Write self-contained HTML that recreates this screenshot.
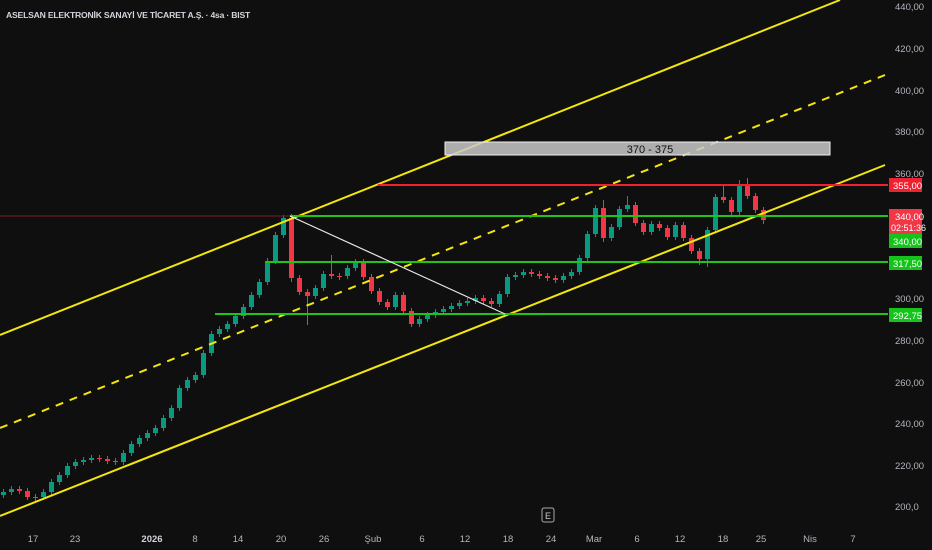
<!DOCTYPE html>
<html><head><meta charset="utf-8"><style>
html,body{margin:0;padding:0;background:#0f0f0f;width:932px;height:550px;overflow:hidden;font-family:"Liberation Sans",sans-serif}
svg{position:absolute;left:0;top:0}
.t{position:absolute;left:6px;top:10px;color:#d1d4dc;font-size:8.6px;font-weight:bold;letter-spacing:-0.2px}
</style></head><body>
<svg width="932" height="550" xmlns="http://www.w3.org/2000/svg">
<path fill="#089981" d="M1,492h5v3h-5zM9,489h5v3h-5zM41,492h5v5h-5zM49,482h5v10h-5zM57,475h5v7h-5zM65,466h5v9h-5zM73,462h5v4h-5zM81,460h5v2h-5zM89,458h5v2h-5zM121,453h5v9h-5zM129,444h5v9h-5zM137,438h5v6h-5zM145,433h5v5h-5zM153,428h5v5h-5zM161,418h5v10h-5zM169,408h5v10h-5zM177,388h5v20h-5zM185,380h5v8h-5zM193,375h5v5h-5zM201,353h5v22h-5zM209,334h5v19h-5zM217,329h5v5h-5zM225,324h5v5h-5zM233,316h5v8h-5zM241,307h5v9h-5zM249,295h5v12h-5zM257,282h5v13h-5zM265,261h5v21h-5zM273,235h5v26h-5zM281,218h5v17h-5zM313,288h5v8h-5zM321,274h5v14h-5zM345,268h5v8h-5zM353,262h5v6h-5zM393,295h5v12h-5zM417,319h5v5h-5zM425,315h5v4h-5zM433,312h5v3h-5zM441,309h5v3h-5zM449,306h5v3h-5zM457,303h5v3h-5zM465,301h5v2h-5zM473,298h5v3h-5zM497,294h5v10h-5zM505,277h5v17h-5zM513,275h5v2h-5zM521,272h5v3h-5zM561,276h5v4h-5zM569,272h5v4h-5zM577,258h5v14h-5zM585,234h5v24h-5zM593,208h5v26h-5zM609,227h5v11h-5zM617,209h5v18h-5zM625,205h5v4h-5zM649,224h5v8h-5zM673,225h5v12h-5zM705,230h5v29h-5zM713,197h5v33h-5zM737,185h5v27h-5z"/>
<path stroke="#089981" stroke-width="1" d="M3.5,489v9M11.5,486v9M43.5,489v11M51.5,479v16M59.5,472v13M67.5,463v15M75.5,459v10M83.5,457v8M91.5,455v8M123.5,450v15M131.5,441v15M139.5,435v12M147.5,430v11M155.5,425v11M163.5,415v16M171.5,405v16M179.5,385v26M187.5,377v14M195.5,372v11M203.5,350v28M211.5,331v25M219.5,326v11M227.5,321v11M235.5,313v14M243.5,304v15M251.5,292v18M259.5,279v19M267.5,258v27M275.5,232v32M283.5,215v23M315.5,285v14M323.5,271v20M347.5,265v14M355.5,259v12M395.5,292v18M419.5,316v11M427.5,312v10M435.5,309v9M443.5,306v9M451.5,303v9M459.5,300v9M467.5,298v8M475.5,295v9M499.5,291v16M507.5,274v23M515.5,272v8M523.5,269v9M563.5,273v10M571.5,269v10M579.5,255v20M587.5,231v30M595.5,205v32M611.5,224v17M619.5,206v24M627.5,196v16M651.5,221v14M675.5,222v18M707.5,227v40M715.5,194v39M739.5,180v35"/>
<path fill="#f23645" d="M17,489h5v2h-5zM25,491h5v6h-5zM33,497h5v1h-5zM97,458h5v1h-5zM105,459h5v2h-5zM113,461h5v1h-5zM289,218h5v60h-5zM297,278h5v14h-5zM305,292h5v4h-5zM329,274h5v2h-5zM337,276h5v1h-5zM361,262h5v15h-5zM369,277h5v14h-5zM377,291h5v11h-5zM385,302h5v5h-5zM401,295h5v16h-5zM409,311h5v13h-5zM481,298h5v3h-5zM489,301h5v3h-5zM529,272h5v2h-5zM537,274h5v2h-5zM545,276h5v2h-5zM553,278h5v2h-5zM601,208h5v30h-5zM633,205h5v18h-5zM641,223h5v9h-5zM657,224h5v4h-5zM665,228h5v9h-5zM681,225h5v13h-5zM689,238h5v13h-5zM697,251h5v8h-5zM721,197h5v3h-5zM729,200h5v12h-5zM745,185h5v11h-5zM753,196h5v14h-5zM761,210h5v10h-5z"/>
<path stroke="#f23645" stroke-width="1" d="M19.5,486v8M27.5,488v12M35.5,494v7M99.5,455v7M107.5,456v8M115.5,458v7M291.5,214v68M299.5,275v20M307.5,289v36M331.5,255v24M339.5,273v7M363.5,259v21M371.5,274v20M379.5,288v17M387.5,299v11M403.5,292v22M411.5,308v19M483.5,295v9M491.5,298v9M531.5,269v8M539.5,271v8M547.5,273v8M555.5,275v8M603.5,200v42M635.5,202v24M643.5,220v15M659.5,221v10M667.5,225v15M683.5,222v19M691.5,235v19M699.5,248v17M723.5,186v17M731.5,197v18M747.5,178v21M755.5,193v20M763.5,207v17"/>
<line x1="0" y1="216" x2="290" y2="216" stroke="#7a1f24" stroke-width="1"/>
<line x1="0" y1="335" x2="840" y2="0" stroke="#f5e50f" stroke-width="2"/>
<line x1="0" y1="428" x2="885" y2="75" stroke="#f5e50f" stroke-width="2" stroke-dasharray="8,7"/>
<line x1="0" y1="516" x2="885" y2="165" stroke="#f5e50f" stroke-width="2"/>
<line x1="378" y1="185" x2="888" y2="185" stroke="#f0202e" stroke-width="2"/>
<line x1="290" y1="216" x2="888" y2="216" stroke="#22c318" stroke-width="2"/>
<line x1="265" y1="262" x2="888" y2="262" stroke="#22c318" stroke-width="2"/>
<line x1="215" y1="314" x2="888" y2="314" stroke="#22c318" stroke-width="2"/>
<line x1="290" y1="216" x2="505" y2="314" stroke="#e8e8e8" stroke-width="1.2"/>
<rect x="445" y="142" width="385" height="13" fill="#c9c9c9" fill-opacity="0.85" stroke="#eee" stroke-width="1"/>
<text x="650" y="153" fill="#111" font-size="11" text-anchor="middle" font-family="Liberation Sans">370 - 375</text>
<g font-size="9.5" fill="#b2b5be" font-family="Liberation Sans">
<text x="895" y="10">440,00</text><text x="895" y="52">420,00</text><text x="895" y="94">400,00</text>
<text x="895" y="135">380,00</text><text x="895" y="177">360,00</text><text x="895" y="302">300,00</text>
<text x="895" y="344">280,00</text><text x="895" y="386">260,00</text><text x="895" y="427">240,00</text>
<text x="895" y="469">220,00</text><text x="895" y="510">200,0</text>
</g>
<g font-size="9.5" font-family="Liberation Sans" fill="#fff">
<rect x="889" y="178" width="33" height="14" fill="#f0202e"/><text x="893" y="189">355,00</text>
<rect x="889" y="209" width="33" height="25" fill="#f23645"/><text x="895" y="220">340,00</text><text x="891" y="231" font-size="9">02:51:36</text>
<rect x="889" y="234" width="33" height="14" fill="#14c41a"/><text x="893" y="245">340,00</text>
<rect x="889" y="256" width="33" height="14" fill="#14c41a"/><text x="893" y="267">317,50</text>
<rect x="889" y="308" width="33" height="14" fill="#14c41a"/><text x="893" y="319">292,75</text>
</g>
<rect x="542" y="508" width="12" height="14" rx="2" fill="none" stroke="#aaa"/>
<text x="548" y="519" font-size="9" fill="#ccc" text-anchor="middle" font-family="Liberation Sans">E</text>
<g font-size="9.5" fill="#b2b5be" font-family="Liberation Sans" text-anchor="middle">
<text x="33" y="542">17</text><text x="75" y="542">23</text><text x="152" y="542" font-weight="bold" fill="#d1d4dc">2026</text>
<text x="195" y="542">8</text><text x="238" y="542">14</text><text x="281" y="542">20</text><text x="324" y="542">26</text>
<text x="373" y="542">Şub</text><text x="422" y="542">6</text><text x="465" y="542">12</text><text x="508" y="542">18</text>
<text x="551" y="542">24</text><text x="594" y="542">Mar</text><text x="637" y="542">6</text><text x="680" y="542">12</text>
<text x="723" y="542">18</text><text x="761" y="542">25</text><text x="810" y="542">Nis</text><text x="853" y="542">7</text>
</g>
</svg>
<div class="t">ASELSAN ELEKTRONİK SANAYİ VE TİCARET A.Ş. · 4sa · BIST</div>
</body></html>
